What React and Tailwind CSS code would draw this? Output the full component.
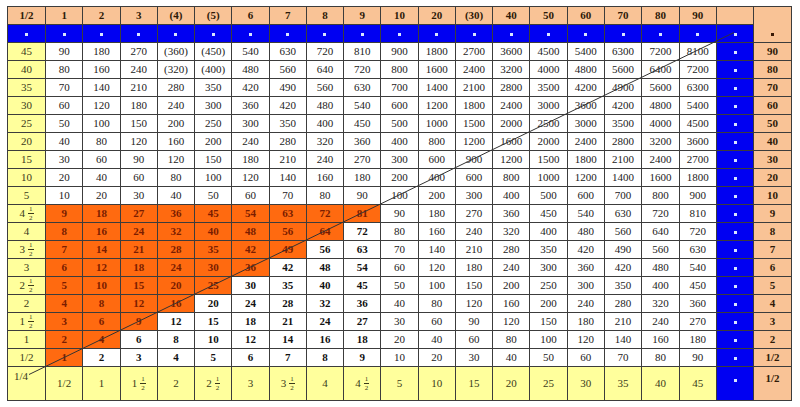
const cols = [1, 2, 3, 4, 5, 6, 7, 8, 9, 10, 20, 30, 40, 50, 60, 70, 80, 90];
const rows = [90, 80, 70, 60, 50, 40, 30, 20, 10, 9, 8, 7, 6, 5, 4, 3, 2, 1];
const parenCols = [4, 5, 30];

function Half({ whole }) {
  return (
    <span className="inline-flex items-center gap-[3px]">
      {whole && <span>{whole}</span>}
      <span className="inline-flex flex-col items-center text-[7px] leading-[6px]">
        <span className="border-b border-current px-[1px] pb-[1px]">1</span>
        <span className="pt-[1px]">2</span>
      </span>
    </span>
  );
}

// label for a multiplier m (row label = m / 2)
function halfLabel(m) {
  if (m === 1) return "1/2";
  if (m % 2 === 0) return String(m / 2);
  return <Half whole={String((m - 1) / 2)} />;
}

function Dot({ dark }) {
  return (
    <span
      className={
        "inline-block w-[3px] h-[3px] align-middle " +
        (dark ? "bg-[#3a1a06]" : "bg-[#d8e4ff]")
      }
    />
  );
}

const cell = "border border-[#3c3c3c] text-center p-0";
const peach = "bg-[#f9c396]";
const yellow = "bg-[#ffff9c]";
const blue = "bg-[#0000f2]";

function App() {
  return (
    <div className="w-[800px] h-[407px] bg-white pt-[6px] pl-[7px] font-[family-name:Liberation_Serif,serif] text-[11px] text-[#222]">
      <div className="relative w-[785px]">
        <table className="w-[785px] table-fixed border-collapse font-[family-name:Liberation_Serif,serif]">
          <colgroup>
            <col className="w-[38px]" />
            {cols.map((c) => (
              <col key={c} />
            ))}
            <col className="w-[37px]" />
            <col className="w-[38px]" />
          </colgroup>
          <tbody>
            {/* header */}
            <tr className="h-[18px] font-bold text-[#2e1a08]">
              <td className={`${cell} ${peach}`}>1/2</td>
              {cols.map((c) => (
                <td key={c} className={`${cell} ${peach}`}>
                  {parenCols.includes(c) ? `(${c})` : c}
                </td>
              ))}
              <td className={`${cell} ${peach}`}></td>
              <td rowSpan={2} className={`${cell} ${peach} align-bottom pb-[6px]`}>
                <div className="h-[3px] flex justify-center">
                  <Dot dark />
                </div>
              </td>
            </tr>
            {/* blue row */}
            <tr className="h-[18px]">
              <td className={`${cell} ${blue}`}>
                <Dot />
              </td>
              {cols.map((c) => (
                <td key={c} className={`${cell} ${blue}`}>
                  <Dot />
                </td>
              ))}
              <td className={`${cell} ${blue}`}>
                <Dot />
              </td>
            </tr>
            {rows.map((m) => (
              <tr key={m} className="h-[18px]">
                <td className={`${cell} ${yellow} text-[#3a3a1a]`}>{halfLabel(m)}</td>
                {cols.map((c) => {
                  const v = c * m;
                  const small = m <= 9 && c <= 9;
                  const orange = small && c <= m;
                  const txt = (c === 4 || c === 5) && m >= 80 ? `(${v})` : v;
                  return (
                    <td
                      key={c}
                      className={
                        cell +
                        (orange
                          ? " bg-[#ff6a10] font-bold text-[#7a1d00]"
                          : small
                          ? " bg-white font-bold text-[#111]"
                          : " bg-white")
                      }
                    >
                      {txt}
                    </td>
                  );
                })}
                <td className={`${cell} ${blue}`}>
                  <Dot />
                </td>
                <td className={`${cell} ${peach} font-bold text-[#2e1a08]`}>{m === 1 ? "1/2" : m}</td>
              </tr>
            ))}
            {/* bottom row */}
            <tr className="h-[34px]">
              <td className={`${cell} ${yellow} align-top text-left pl-[6px] pt-[1px] text-[#3a3a1a]`}>1/4</td>
              {cols.map((c) => (
                <td key={c} className={`${cell} ${yellow} text-[#3a3a1a]`}>
                  {halfLabel(c)}
                </td>
              ))}
              <td className={`${cell} ${blue} align-top pt-[4px]`}>
                <Dot />
              </td>
              <td className={`${cell} ${peach} align-top pt-[3px] font-bold text-[#2e1a08]`}>1/2</td>
            </tr>
          </tbody>
        </table>
        <svg className="absolute inset-0 w-full h-full pointer-events-none" viewBox="0 0 785 394">
          <line x1="22" y1="368" x2="727" y2="26" stroke="#333" strokeWidth="1" />
        </svg>
      </div>
    </div>
  );
}

export default App;
